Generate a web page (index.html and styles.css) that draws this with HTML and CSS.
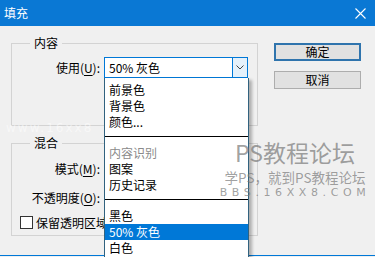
FILE: index.html
```html
<!DOCTYPE html>
<html lang="zh-CN">
<head>
	<meta charset="UTF-8">
	<title>填充</title>
	<link rel="stylesheet" href="styles.css">
</head>
<body>
	<div class="dialog">
		<div class="titlebar">
			<span class="title">填充</span>
			<svg class="close" width="11" height="11" viewBox="0 0 11 11">
				<path d="M0.5 0.5 L10.5 10.5 M10.5 0.5 L0.5 10.5" stroke="#fff" stroke-width="1.1" fill="none"/>
			</svg>
		</div>
		<div class="body">
			<div class="main">
				<fieldset class="group group-content">
					<legend>内容</legend>
					<div class="row">
						<label class="label">使用(<u>U</u>):</label>
						<div class="combo">
							<div class="combo-box">
								<span class="combo-value">50% 灰色</span>
								<span class="combo-arrow">
									<svg width="8" height="5" viewBox="0 0 8 5"><path d="M0.5 0.5 L4 4 L7.5 0.5" stroke="#444" stroke-width="1" fill="none"/></svg>
								</span>
							</div>
							<ul class="combo-list">
								<li>前景色</li>
								<li>背景色</li>
								<li>颜色...</li>
								<li class="sep"></li>
								<li class="muted">内容识别</li>
								<li>图案</li>
								<li>历史记录</li>
								<li class="sep"></li>
								<li>黑色</li>
								<li class="on">50% 灰色</li>
								<li>白色</li>
							</ul>
						</div>
					</div>
				</fieldset>
				<fieldset class="group group-blend">
					<legend>混合</legend>
					<div class="row">
						<label class="label">模式(<u>M</u>):</label>
					</div>
					<div class="row row-opacity">
						<label class="label">不透明度(<u>O</u>):</label>
					</div>
					<div class="row row-check">
						<span class="checkbox"></span>
						<span>保留透明区域</span>
					</div>
				</fieldset>
			</div>
			<div class="buttons">
				<button class="btn btn-default">确定</button>
				<button class="btn">取消</button>
			</div>
		</div>
		<div class="mark-faint">www.16xx8</div>
		<div class="watermark">
			<div class="mark-big">PS教程论坛</div>
			<div class="mark-mid">学PS，就到PS教程论坛</div>
			<div class="mark-url">BBS.16XX8.COM</div>
		</div>
	</div>
</body>
</html>
```

FILE: styles.css
```css
* { margin: 0; padding: 0; box-sizing: border-box; }
html, body { width: 375px; height: 257px; overflow: hidden; background: #f0f0f0; }
body { font-family: "Noto Sans CJK SC", "Microsoft YaHei", sans-serif; font-size: 12px; color: #000; }

.dialog { position: relative; width: 375px; height: 256px; border-bottom: 1px solid #0078d7; background: #f0f0f0; }

.titlebar { height: 26px; background: #0a78d4; display: flex; align-items: center; justify-content: space-between; padding: 0 9px 0 4px; }
.title { color: #fff; font-size: 12px; line-height: 16px; }
.close { margin-top: 1px; }

.body { display: flex; gap: 16px; padding: 9px 0 0 11px; }
.main { width: 247px; }

.group { width: 247px; border: 1px solid #d3d3d3; margin: 0; min-inline-size: 0; }
.group legend { margin-left: 18px; padding: 0 4px; line-height: 16px; font-size: 12px; }
.group-content { padding: 6px 0 47px 0; }
.group-blend { margin-top: 9px; padding: 7px 0 5px 0; }

.row { display: flex; align-items: center; height: 21px; }
.row-opacity { margin-top: 8px; }
.row-check { margin-top: 6px; height: 16px; padding-left: 8px; gap: 3px; white-space: nowrap; }
.label { width: 92px; padding-right: 4px; text-align: right; line-height: 16px; white-space: nowrap; }
.label u { text-underline-offset: 2px; }

.checkbox { width: 13px; height: 13px; border: 1px solid #333; background: #fff; flex: none; }

.combo { position: relative; width: 144px; z-index: 3; }
.combo-box { height: 21px; border: 1px solid #0078d7; background: #fff; display: flex; align-items: stretch; }
.combo-value { flex: 1; padding-left: 4px; line-height: 19px; }
.combo-arrow { width: 15px; background: #e5f1fb; border-left: 1px solid #0078d7; display: flex; align-items: center; justify-content: center; }

.combo-list { position: absolute; top: 100%; left: 0; width: 145px; height: 190px; list-style: none; background: #fff; border: 1px solid #31627f; border-top: none; padding-top: 4px; box-shadow: 3px 2px 3px rgba(0,0,0,.28); }
.combo-list li { height: 16px; line-height: 16px; padding-left: 4px; white-space: nowrap; }
.combo-list li.sep { height: 1px; background: #000; margin: 6px 0 8px; padding: 0; }
.combo-list li.muted { color: #8a8a8a; }
.combo-list li.on { background: #0078d7; color: #fff; }

.buttons { display: flex; flex-direction: column; gap: 10px; padding-top: 8px; }
.btn { width: 87px; height: 18px; font-family: inherit; font-size: 12px; line-height: 14px; background: #e1e1e1; border: 1px solid #adadad; color: #000; }
.btn-default { border: 2px solid #2f74ad; }

.mark-faint { position: absolute; left: 6px; top: 122px; font-family: "DejaVu Sans", sans-serif; font-size: 12px; line-height: 12px; letter-spacing: 2px; color: rgba(255,255,255,.5); z-index: 5; white-space: nowrap; }

.watermark { position: absolute; left: 215px; top: 140px; width: 160px; text-align: center; z-index: 6; white-space: nowrap; color: rgba(120,120,120,.7); }
.mark-big { font-size: 23px; line-height: 24px; }
.mark-mid { font-size: 13.5px; line-height: 20px; margin-top: 3px; }
.mark-url { font-family: "DejaVu Sans", sans-serif; font-size: 11px; line-height: 12px; letter-spacing: 4.6px; }
```
